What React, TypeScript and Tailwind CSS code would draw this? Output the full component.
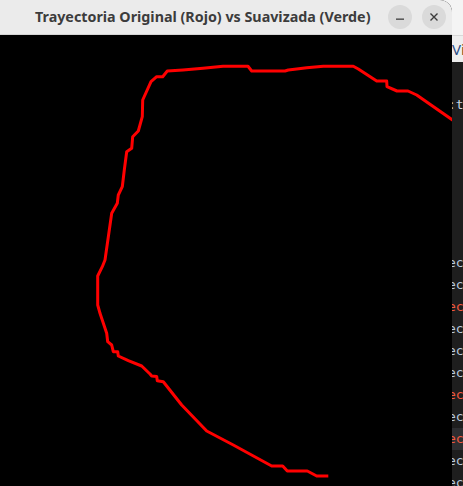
import React from "react";

const pts: [number, number][] = [
  [454, 121], [416.7, 95], [408, 91], [397, 91], [387, 86.7], [386.7, 81], [376.7, 81],
  [358.3, 69], [353.3, 66.3], [323.3, 66.3], [306.7, 67.7], [296.7, 69], [288.3, 70],
  [285, 71], [251.7, 71], [248, 66.3], [223, 66.3], [203, 68.3], [183, 70], [167.3, 71],
  [162.7, 76.7], [156.7, 76.7], [151, 81.7], [142.7, 100], [142.3, 116.7], [138.3, 131],
  [132.7, 136.7], [131.7, 148.3], [126.7, 151.7], [124.3, 170], [122.3, 186.7], [118.3, 195],
  [117.3, 203.3], [111.7, 213.3], [105, 260], [102.3, 266.7], [97.7, 276], [97.7, 305],
  [100, 313.3], [106.7, 333.3], [107.7, 341.7], [111.7, 345], [113.3, 351.7], [117.7, 351.7],
  [118.3, 356], [128.3, 360.7], [141.7, 366], [150, 374], [151.7, 376], [156.7, 376.5],
  [157.3, 380.7], [163.3, 381.7], [181.7, 405], [206.7, 431], [233.3, 445], [271.7, 466],
  [282.7, 466], [287.3, 471], [307.3, 471], [316.7, 476], [328.3, 476],
];

const rows: { c: string; hl?: boolean }[] = [
  { c: "blue" }, { c: "blue" }, { c: "red" }, { c: "blue" }, { c: "blue" }, { c: "blue" },
  { c: "red" }, { c: "blue" }, { c: "red", hl: true }, { c: "blue" }, { c: "blue" },
];

export default function App() {
  const d = pts.map((p, i) => `${i === 0 ? "M" : "L"}${p[0]} ${p[1]}`).join(" ");
  return (
    <div className="w-[463px] h-[486px] flex bg-[#f4f4f4] overflow-hidden">
      <div className="w-[452px] h-full flex flex-col rounded-tr-[12px] overflow-hidden bg-black">
        <div
          className="h-[35px] shrink-0 bg-[#ebebeb] border-b border-[#d4d4d4] flex items-center relative"
          style={{ fontFamily: '"Noto Sans", "Open Sans", sans-serif' }}
        >
          <div className="pl-[35px] text-[14.3px] font-bold text-[#3c3c3c] leading-none pt-[1px] whitespace-nowrap">
            Trayectoria Original (Rojo) vs Suavizada (Verde)
          </div>
          <div className="ml-auto mr-[6px] flex gap-[10px] items-center">
            <div className="w-[24px] h-[24px] rounded-full bg-[#dadada] flex items-center justify-center">
              <svg width="24" height="24" viewBox="0 0 24 24">
                <rect x="8" y="13.5" width="8" height="1.3" fill="#3c3c3c" />
              </svg>
            </div>
            <div className="w-[24px] h-[24px] rounded-full bg-[#dadada] flex items-center justify-center">
              <svg width="24" height="24" viewBox="0 0 24 24">
                <path d="M8.5 8.5 L15.5 15.5 M15.5 8.5 L8.5 15.5" stroke="#3c3c3c" strokeWidth="1.4" />
              </svg>
            </div>
          </div>
        </div>
        <div className="flex-1 bg-black">
          <svg width="452" height="451" viewBox="0 35 452 451" className="block">
            <path d={d} fill="none" stroke="#ff0000" strokeWidth="3" strokeLinejoin="round" />
          </svg>
        </div>
      </div>
      <div
        className="w-[11px] h-full flex flex-col overflow-hidden"
        style={{ fontFamily: '"DejaVu Sans Mono", monospace' }}
      >
        <div className="h-[35px] shrink-0 bg-[#f4f4f4]" />
        <div
          className="h-[27px] shrink-0 bg-[#eeeeee] border-t border-[#d8d8d8] flex items-center text-[15px] leading-none whitespace-nowrap"
          style={{ fontFamily: '"Noto Sans", sans-serif' }}
        >
          <span className="text-[#2d4f86]">V</span>
          <span className="text-[#6b4a2a]">i</span>
        </div>
        <div className="flex-1 bg-[#1e1e1e] flex flex-col text-[13px] leading-[22px] whitespace-nowrap">
          <div className="h-[32px] shrink-0" />
          <div className="h-[22px] text-[#c8d4e4] -ml-[4px]">:tc</div>
          <div className="h-[136px] shrink-0" />
          {rows.map((r, i) => (
            <div
              key={i}
              className={`h-[22px] shrink-0 -ml-[4px] ${r.hl ? "bg-[#2d2e31]" : ""}`}
            >
              <span className={r.c === "red" ? "text-[#f0583f]" : "text-[#b8c8dc]"}>ec</span>
              <span className="text-[#4aa3ff]">l</span>
            </div>
          ))}
        </div>
      </div>
    </div>
  );
}
